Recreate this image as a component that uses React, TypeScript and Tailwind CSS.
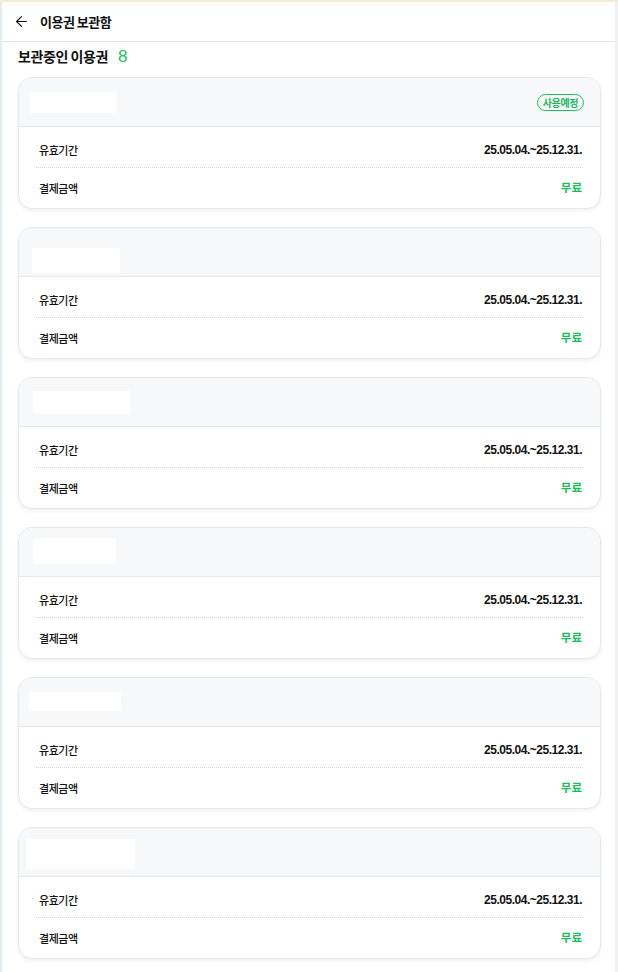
import { ArrowLeft } from "lucide-react";

type Ticket = {
  id: number;
  mask: { ml: number; mt: number; w: number; h: number };
  badge?: string;
};

const tickets: Ticket[] = [
  { id: 1, mask: { ml: 11, mt: 14, w: 87, h: 21 }, badge: "사용예정" },
  { id: 2, mask: { ml: 13, mt: 20, w: 88, h: 25 } },
  { id: 3, mask: { ml: 14, mt: 13, w: 97, h: 23 } },
  { id: 4, mask: { ml: 14, mt: 10, w: 83, h: 26 } },
  { id: 5, mask: { ml: 10, mt: 14, w: 92, h: 19 } },
  { id: 6, mask: { ml: 7, mt: 11, w: 109, h: 30 } },
];

const kr = "font-['Noto_Sans_CJK_KR',_'Noto_Sans',_sans-serif]";

const TicketCard = ({ ticket }: { ticket: Ticket }) => {
  return (
    <div className="rounded-[14px] border border-[#e4e7eb] bg-white shadow-[0_2px_4px_rgba(0,0,0,0.06)] overflow-hidden">
      <div className="h-[49px] bg-[#f7f8fa] border-b border-[#e4e7eb] flex justify-between items-start">
        <div
          className="bg-white"
          style={{
            marginLeft: ticket.mask.ml,
            marginTop: ticket.mask.mt,
            width: ticket.mask.w,
            height: ticket.mask.h,
          }}
        />
        {ticket.badge && (
          <span
            className={`${kr} mt-[16px] mr-[16px] h-[17px] px-[5px] flex items-center rounded-full border border-[#19c15d] text-[10px] font-bold leading-none text-[#19b85a] tracking-[-0.04em]`}
          >
            {ticket.badge}
          </span>
        )}
      </div>
      <div className="px-[17px] pt-[10px] pb-[7px]">
        <div className="h-[26px] flex items-center justify-between">
          <span className={`${kr} pl-[3px] text-[11px] font-medium text-[#111] tracking-[-0.04em]`}>
            유효기간
          </span>
          <span className="font-['Liberation_Sans',_Arial,_sans-serif] text-[12px] font-bold text-[#111] tracking-[-0.04em] pr-[1px]">
            25.05.04.~25.12.31.
          </span>
        </div>
        <div className="mt-[4px] border-t border-dotted border-[#d4d4d4]" />
        <div className="mt-[7px] h-[26px] flex items-center justify-between">
          <span className={`${kr} pl-[3px] text-[11px] font-medium text-[#111] tracking-[-0.04em]`}>
            결제금액
          </span>
          <span className={`${kr} text-[11.5px] font-bold text-[#17be5a] pr-[1px]`}>무료</span>
        </div>
      </div>
    </div>
  );
};

export default function App() {
  return (
    <div className="min-h-screen w-full border-t-2 border-[#f3ecd6] bg-[#f1f2f4] flex">
      <div className="w-[2px] bg-[#e6ebf0] shrink-0" />
      <div className="w-[613px] bg-white shrink-0 pb-[13px]">
        <div className="h-[40px] border-b border-[#e5e7eb] flex items-center">
          <ArrowLeft className="ml-[11px] w-[17px] h-[17px] text-[#111]" strokeWidth={1.6} />
          <span className={`${kr} ml-[10px] text-[13px] font-bold text-[#111] tracking-[-0.04em]`}>
            이용권 보관함
          </span>
        </div>
        <div className="h-[35px] pl-[16px] flex items-start pt-[4px]">
          <span className={`${kr} text-[14px] font-bold text-[#111] tracking-[-0.03em]`}>
            보관중인 이용권
          </span>
          <span className="ml-[10px] font-['Liberation_Sans',_Arial,_sans-serif] text-[17px] text-[#1bbf5c] leading-[20px] mt-[1px]">
            8
          </span>
        </div>
        <div className="pl-[16px] pr-[14px] flex flex-col gap-[18px]">
          {tickets.map((t) => (
            <TicketCard key={t.id} ticket={t} />
          ))}
        </div>
      </div>
      <div className="flex-1 bg-[#f0f0f0]" />
    </div>
  );
}
